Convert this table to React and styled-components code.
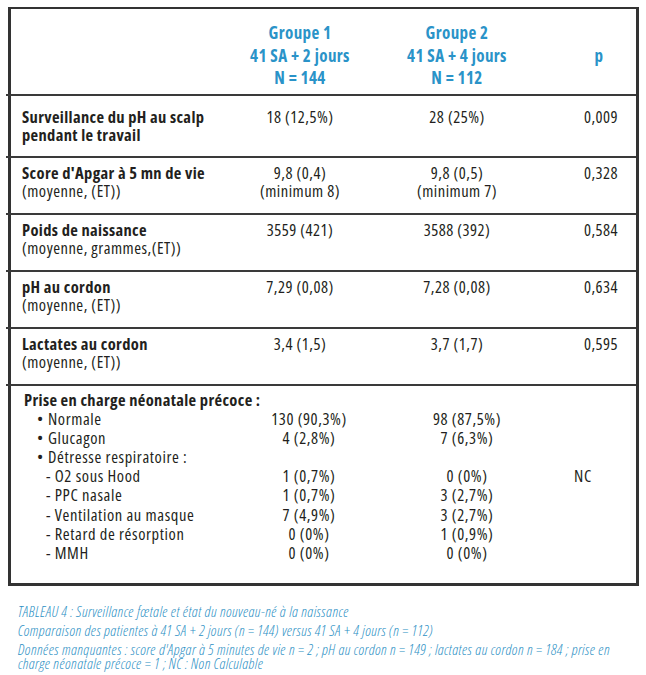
import React from "react";
import styled, { createGlobalStyle } from "styled-components";

const GlobalStyle = createGlobalStyle`
  html, body { margin: 0; padding: 0; background: #ffffff; }
  body { font-family: "Open Sans", "DejaVu Sans Condensed", sans-serif; font-stretch: 75%; }
`;

const Page = styled.div`
  width: 646px;
  height: 675px;
  padding: 7px 7px 0 8px;
  box-sizing: border-box;
  color: #231f20;
`;

const Table = styled.div`
  width: 631px;
  box-sizing: border-box;
  border: 3px solid #333333;
  border-top-width: 2px;
`;

const Divider = styled.div`
  height: 2px;
  background: #3a3a3a;
  margin-left: -5px;
`;

const Row = styled.div`
  display: grid;
  grid-template-columns: 219px 140px 174px 1fr;
  align-items: start;
  box-sizing: border-box;
  height: ${(p) => p.$h}px;
  padding-top: ${(p) => p.$pt}px;
  font-size: 16.5px;
  letter-spacing: 0.5px;
  line-height: 18px;
`;

const HeadCell = styled.div`
  color: #2a93c8;
  font-weight: bold;
  text-align: center;
  font-size: 17px;
  letter-spacing: 0.4px;
  line-height: 22.5px;
  align-self: ${(p) => (p.$middle ? "center" : "start")};
  padding-left: ${(p) => p.$pl || 0}px;
  padding-bottom: ${(p) => (p.$middle ? 4 : 0)}px;
`;

const Label = styled.div`
  padding-left: 11px;
  white-space: nowrap;
`;

const LabelMain = styled.div`
  font-weight: bold;
  letter-spacing: 0.35px;
`;

const LabelSub = styled.div`
  font-weight: normal;
`;

const Value = styled.div`
  text-align: center;
  padding-left: ${(p) => p.$pl || 0}px;
`;

const Section = styled.div`
  padding: 4px 0 0 0;
  height: 197px;
  box-sizing: border-box;
  font-size: 16.5px;
  letter-spacing: 0.6px;
  line-height: 19.1px;
`;

const SectionTitle = styled.div`
  font-weight: bold;
  letter-spacing: 0.35px;
  padding-left: 13px;
`;

const ListRow = styled.div`
  display: grid;
  grid-template-columns: 219px 166px 142px 90px;
`;

const ListLabel = styled.div`
  padding-left: ${(p) => (p.$level === 2 ? 35 : 26)}px;
  white-space: nowrap;
`;

const Bullet = styled.span`
  display: inline-block;
  width: 11px;
`;

const ListValue = styled.div`
  text-align: center;
  padding-right: ${(p) => p.$pr || 0}px;
`;

const Caption = styled.div`
  margin-top: 18px;
  padding-left: 10px;
  color: #2b8fc4;
  font-style: italic;
  font-weight: 300;
  font-size: 15px;
  letter-spacing: 0.4px;
  width: 625px;
`;

const CaptionLine = styled.p`
  margin: 0 0 5px 0;
  line-height: 14px;
  white-space: nowrap;
`;

const rows = [
  { main: "Surveillance du pH au scalp", main2: "pendant le travail", g1: ["18 (12,5%)"], g2: ["28 (25%)"], p: "0,009" },
  { main: "Score d'Apgar à 5 mn de vie", sub: "(moyenne, (ET))", g1: ["9,8 (0,4)", "(minimum 8)"], g2: ["9,8 (0,5)", "(minimum 7)"], p: "0,328" },
  { main: "Poids de naissance", sub: "(moyenne, grammes,(ET))", g1: ["3559 (421)"], g2: ["3588 (392)"], p: "0,584" },
  { main: "pH au cordon", sub: "(moyenne, (ET))", g1: ["7,29 (0,08)"], g2: ["7,28 (0,08)"], p: "0,634" },
  { main: "Lactates au cordon", sub: "(moyenne, (ET))", g1: ["3,4 (1,5)"], g2: ["3,7 (1,7)"], p: "0,595" },
];

const list = [
  { level: 1, label: "Normale", g1: "130 (90,3%)", g2: "98 (87,5%)" },
  { level: 1, label: "Glucagon", g1: "4 (2,8%)", g2: "7 (6,3%)" },
  { level: 1, label: "Détresse respiratoire :", g1: "", g2: "" },
  { level: 2, label: "O2 sous Hood", g1: "1 (0,7%)", g2: "0 (0%)", p: "NC" },
  { level: 2, label: "PPC nasale", g1: "1 (0,7%)", g2: "3 (2,7%)" },
  { level: 2, label: "Ventilation au masque", g1: "7 (4,9%)", g2: "3 (2,7%)" },
  { level: 2, label: "Retard de résorption", g1: "0 (0%)", g2: "1 (0,9%)" },
  { level: 2, label: "MMH", g1: "0 (0%)", g2: "0 (0%)" },
];

export default function App() {
  return (
    <Page>
      <GlobalStyle />
      <Table>
        <Row $h={85} $pt={13}>
          <div />
          <HeadCell>
            Groupe 1<br />41 SA + 2 jours<br />N = 144
          </HeadCell>
          <HeadCell>
            Groupe 2<br />41 SA + 4 jours<br />N = 112
          </HeadCell>
          <HeadCell $middle $pl={18}>p</HeadCell>
        </Row>
        {rows.map((r, i) => (
          <React.Fragment key={i}>
            <Divider />
            <Row $h={i === 0 ? 60 : 55} $pt={i === 0 ? 12 : 6}>
              <Label>
                <LabelMain>{r.main}</LabelMain>
                {r.main2 && <LabelMain>{r.main2}</LabelMain>}
                {r.sub && <LabelSub>{r.sub}</LabelSub>}
              </Label>
              <Value>
                {r.g1.map((t) => (
                  <div key={t}>{t}</div>
                ))}
              </Value>
              <Value>
                {r.g2.map((t) => (
                  <div key={t}>{t}</div>
                ))}
              </Value>
              <Value $pl={22}>{r.p}</Value>
            </Row>
          </React.Fragment>
        ))}
        <Divider />
        <Section>
          <SectionTitle>Prise en charge néonatale précoce :</SectionTitle>
          {list.map((it) => (
            <ListRow key={it.label}>
              <ListLabel $level={it.level}>
                {it.level === 1 ? <Bullet>•</Bullet> : "- "}
                {it.label}
              </ListLabel>
              <ListValue $pr={8}>{it.g1}</ListValue>
              <ListValue>{it.g2}</ListValue>
              <ListValue>{it.p || ""}</ListValue>
            </ListRow>
          ))}
        </Section>
      </Table>
      <Caption>
        <CaptionLine>TABLEAU 4 : Surveillance fœtale et état du nouveau-né à la naissance</CaptionLine>
        <CaptionLine>Comparaison des patientes à 41 SA + 2 jours (n = 144) versus 41 SA + 4 jours (n = 112)</CaptionLine>
        <CaptionLine>
          Données manquantes : score d'Apgar à 5 minutes de vie n = 2 ; pH au cordon n = 149 ; lactates au cordon n = 184 ; prise en
          <br />
          charge néonatale précoce = 1 ; NC : Non Calculable
        </CaptionLine>
      </Caption>
    </Page>
  );
}
